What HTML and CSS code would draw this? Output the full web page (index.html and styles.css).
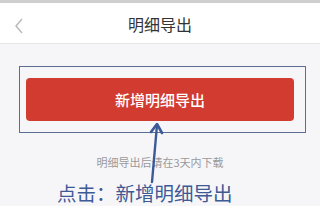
FILE: index.html
```html
<!DOCTYPE html>
<html lang="zh">
<head>
<meta charset="utf-8">
<link rel="stylesheet" href="styles.css">
</head>
<body>
<div class="topstrip"></div>
<header class="nav">
  <svg class="back" width="10" height="16" viewBox="0 0 10 16"><path d="M8 1 L2 8 L8 15" fill="none" stroke="#b8b8b8" stroke-width="1.4"/></svg>
  <div class="title">明细导出</div>
</header>
<main class="content">
  <div class="highlight">
    <button class="btn">新增明细导出</button>
  </div>
  <p class="hint">明细导出后请在3天内下载</p>
  <p class="note">点击：新增明细导出</p>
  <svg class="arrow" width="20" height="62" viewBox="0 0 20 62"><path d="M6 60 L11 3" fill="none" stroke="#3c5a98" stroke-width="2.4" stroke-linecap="round"/><path d="M5 10 L11 2 L16 11" fill="none" stroke="#3c5a98" stroke-width="2.6" stroke-linecap="round" stroke-linejoin="round"/></svg>
</main>
</body>
</html>
```
FILE: styles.css
```css
html, body {
  margin: 0;
  padding: 0;
}
body {
  width: 320px;
  height: 206px;
  overflow: hidden;
  background: #f6f6f8;
  font-family: "Noto Sans CJK SC", "Noto Sans", sans-serif;
  position: relative;
}
.topstrip {
  height: 3px;
  background: #cfcfcf;
}
.nav {
  height: 40px;
  background: #fff;
  border-bottom: 1px solid #e6e6e6;
  display: flex;
  align-items: center;
  justify-content: center;
  position: relative;
}
.back {
  position: absolute;
  left: 14px;
  top: 15px;
}
.title {
  font-size: 16px;
  color: #333;
  line-height: 20px;
  margin-top: 2px;
}
.content {
  position: relative;
  padding-top: 22px;
}
.highlight {
  margin-left: 19px;
  border: 1px solid #5c6f93;
  padding: 11px 11px 0 6px;
  box-sizing: border-box;
  width: 287px;
  height: 67px;
}
.btn {
  display: block;
  width: 268px;
  height: 43px;
  border: none;
  border-radius: 4px;
  background: #d23b2f;
  color: #fff;
  font-family: inherit;
  font-size: 15px;
  font-weight: 500;
  padding: 0;
  line-height: 43px;
}
.hint {
  margin: 21px 0 0;
  text-align: center;
  font-size: 11px;
  line-height: 16px;
  color: #9a9a9a;
}
.note {
  margin: 11px 0 0 57px;
  font-size: 19.5px;
  line-height: 24px;
  color: #3d5a97;
}
.arrow {
  position: absolute;
  left: 146px;
  top: 78px;
}
```
